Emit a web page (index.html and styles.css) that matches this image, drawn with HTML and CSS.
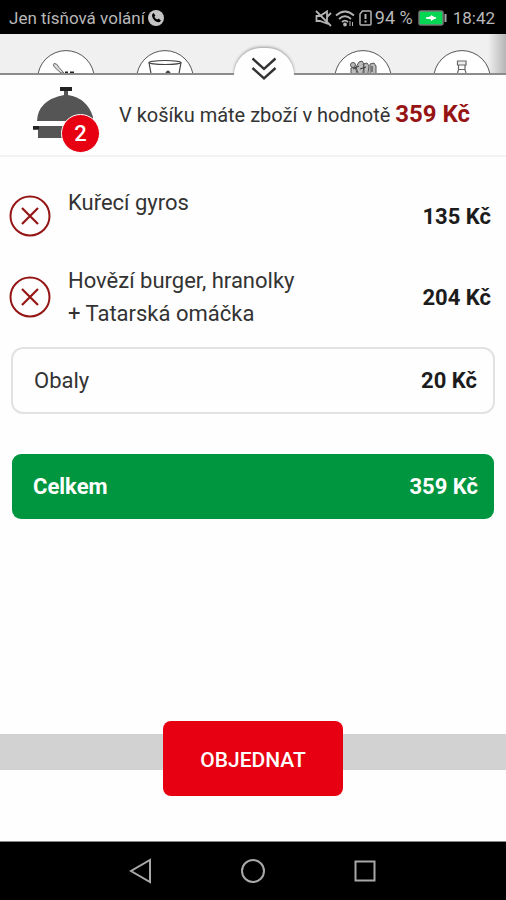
FILE: index.html
```html
<!DOCTYPE html>
<html lang="cs">
<head>
<meta charset="utf-8">
<meta name="viewport" content="width=device-width, initial-scale=1">
<title>Košík</title>
<link rel="stylesheet" href="styles.css">
</head>
<body>
<header class="status">
  <span class="carrier">Jen tísňová volání</span>
  <svg class="call" width="16" height="16" viewBox="0 0 16 16"><circle cx="8" cy="8" r="8" fill="#c4c4c4"/><path d="M4.2 4.2 5.6 3 7.4 5.600 6.400 6.800C7 8.100 8 9 9.300 9.600L10.500 8.600 13 10.400 11.800 12C8 13 3.200 8.200 4.200 4.200Z" fill="#000"/></svg>
  <span class="indicators">
    <svg width="17" height="18" viewBox="0 0 17 18" fill="none" stroke="#b4b4b4" stroke-width="1.800"><path d="M1.500 7H5L12 2.500v12L5 12H1.500ZM1 2l15 15M12 8l4-4"/></svg>
    <svg width="20" height="18" viewBox="0 0 20 18" fill="none" stroke="#b4b4b4" stroke-width="1.800"><path d="M1 6.500Q10-1.500 19 6.500M4 10Q10 4.500 16 10M7 13Q10 10.200 13 13"/><circle cx="10" cy="15.500" r="1" fill="#b4b4b4"/><path d="M15 12v5M17.500 13v4" stroke-width="1"/></svg>
    <svg width="14" height="18" viewBox="0 0 14 18" fill="none" stroke="#b4b4b4" stroke-width="1.500"><path d="M4.500 2H12q1 0 1 1v12q0 1-1 1H3q-1 0-1-1V5Z"/><path d="M7.500 5v5M7.500 11.500v2" stroke-width="2"/></svg>
    <span class="percent">94 %</span>
    <svg width="29" height="16" viewBox="0 0 29 16"><rect x="1" y="1" width="24" height="14" rx="2" fill="#05d653" stroke="#777" stroke-width="1.500"/><path d="M27.500 4v8" stroke="#aaa" stroke-width="2"/><path d="M8 8l5-2V5l5 3-5 3V9.500Z" fill="#fff"/><path d="M8 8h10" stroke="#fff" stroke-width="1.500"/></svg>
    <time class="clock">18:42</time>
  </span>
</header>

<nav class="categories" aria-label="Kategorie">
  <a class="category" href="#" aria-label="Hlavní jídla"><svg width="58" height="23" viewBox="0 0 58 23"><circle cx="29" cy="29" r="28.400" fill="#fff" stroke="#555"/><path d="M17 13.500q3-.5 5 4l5 5.500h-3l-4-3.500q-5-4-3-6Z" fill="#ddd" stroke="#666"/><path d="M28 22.300h3M33 22.300h4" stroke="#222" stroke-width="1.800"/></svg></a>
  <a class="category" href="#" aria-label="Polévky"><svg width="58" height="23" viewBox="0 0 58 23"><circle cx="29" cy="29" r="28.400" fill="#fff" stroke="#555"/><g fill="none" stroke="#444" stroke-width="1.200"><ellipse cx="29" cy="12.500" rx="16" ry="2"/><path d="M13 12.500l2 11M45 12.500l-2 11"/><path d="M30 23l2-1.500 2 1.500" stroke-width="2"/></g></svg></a>
  <button class="collapse" type="button" aria-label="Skrýt košík"><svg width="26" height="24" viewBox="0 0 26 24" fill="none" stroke="#333" stroke-width="2.400"><path d="M1.500 1.500 13 12 24.500 1.500M1.500 11 13 21.500 24.500 11"/></svg></button>
  <a class="category" href="#" aria-label="Přílohy"><svg width="58" height="23" viewBox="0 0 58 23"><circle cx="29" cy="29" r="28.400" fill="#fff" stroke="#555"/><g fill="#bbb" stroke="#555"><circle cx="19" cy="15" r="2.500"/><path d="M17 23v-5l4-1 2 6M24 23l-2-6 3-5 3-1 2 3-1 9M30 23v-6l-1-3 4-1 2 3-1 7M36 23v-9l4-1 2 3v7"/><path d="M19 19l6-3M26 19l6-2M38 16v6" stroke="#333"/></g></svg></a>
  <a class="category" href="#" aria-label="Nápoje"><svg width="58" height="23" viewBox="0 0 58 23"><circle cx="29" cy="29" r="28.400" fill="#fff" stroke="#555"/><path d="M24.500 11h8.500v4h-8.500ZM25.500 15v5l-1 3M32 15v5l1 3M25.500 19.500h6.500" fill="#eee" stroke="#666" stroke-width="1.200"/></svg></a>
</nav>

<main class="cart">
  <div class="summary">
    <div class="dish">
      <svg width="62" height="51" viewBox="0 0 62 51" fill="#555"><path d="M27 0h12v4h-4v4q19 3 25 22v4H4q1-21 27-26V4h-4Z"/><path d="M0 39h62v4h-4l-1 8H5V43H0Z"/><path d="M27 0h12v4H27ZM0 39h6v3H0Z" fill="#222"/></svg>
      <span class="badge">2</span>
    </div>
    <p class="worth">V košíku máte zboží v hodnotě <strong class="amount">359 Kč</strong></p>
  </div>

  <ul class="items">
    <li class="item">
      <button class="remove" type="button" aria-label="Odebrat Kuřecí gyros"><svg width="42" height="42" viewBox="0 0 42 42" fill="none" stroke="#951515" stroke-width="2"><circle cx="21" cy="21" r="19.500"/><path d="M13 13l16 16M29 13 13 29" stroke-width="2.200"/></svg></button>
      <span class="name">Kuřecí gyros</span>
      <strong class="price">135 Kč</strong>
    </li>
    <li class="item">
      <button class="remove" type="button" aria-label="Odebrat Hovězí burger"><svg width="42" height="42" viewBox="0 0 42 42" fill="none" stroke="#951515" stroke-width="2"><circle cx="21" cy="21" r="19.500"/><path d="M13 13l16 16M29 13 13 29" stroke-width="2.200"/></svg></button>
      <span class="name">Hovězí burger, hranolky<br>+ Tatarská omáčka</span>
      <strong class="price">204 Kč</strong>
    </li>
  </ul>

  <div class="row packaging"><span class="label">Obaly</span><strong class="price">20 Kč</strong></div>
  <div class="row total"><strong>Celkem</strong><strong>359 Kč</strong></div>

  <div class="checkout"><button class="order" type="button">OBJEDNAT</button></div>
</main>

<nav class="system" aria-label="Systém">
  <button class="key" type="button" aria-label="Zpět"><svg width="26" height="26" viewBox="0 0 26 26"><path d="M22 2v22L3 13Z"/></svg></button>
  <button class="key" type="button" aria-label="Domů"><svg width="26" height="26" viewBox="0 0 26 26"><circle cx="13" cy="13" r="11"/></svg></button>
  <button class="key" type="button" aria-label="Přehled"><svg width="26" height="26" viewBox="0 0 26 26"><rect x="3.500" y="3.500" width="19" height="19"/></svg></button>
</nav>
</body>
</html>
```
FILE: styles.css
```css
* { box-sizing: border-box; }

body {
  margin: 0;
  min-height: 100vh;
  display: flex;
  flex-direction: column;
  background: #fefefe;
  color: #1c1c1c;
  font: 22px/33px Roboto, sans-serif;
}

button {
  padding: 0;
  border: 0;
  background: none;
  font: inherit;
}

svg { display: block; flex: none; }

.status {
  height: 34px;
  display: flex;
  align-items: center;
  gap: 3px;
  padding: 2px 11px 0 9px;
  background: #000;
  color: #b8b8b8;
  font-size: 17px;
  line-height: 20px;
  white-space: nowrap;
}

.indicators {
  display: flex;
  align-items: center;
  gap: 3px;
  margin-left: auto;
}

.percent { margin-right: 2px; font-size: 18px; }
.clock { margin-left: 3px; font-size: 17px; }

.categories {
  height: 41px;
  display: flex;
  align-items: flex-end;
  justify-content: space-between;
  padding: 0 15px 0 37px;
  border-bottom: 2px solid #8c8c8c;
  background: linear-gradient(to left, #b5b5b5, #f0f0f0 18px);
}

.collapse {
  position: relative;
  width: 60px;
  height: 33px;
  margin: 0 -1px -8px;
  display: flex;
  justify-content: center;
  padding-top: 9px;
}

.collapse::before {
  content: "";
  position: absolute;
  inset: 0 0 6px;
  border-radius: 30px 30px 0 0;
  background: #fefefe;
  box-shadow: 0 -1px 3px #999;
  clip-path: inset(-6px -6px 0);
}

.collapse svg { position: relative; }

.cart {
  flex: 1;
  display: flex;
  flex-direction: column;
}

.summary {
  height: 82px;
  display: flex;
  align-items: center;
  gap: 24px;
  padding: 0 32px 0 33px;
  border-bottom: 2px solid #f3f3f3;
}

.dish { position: relative; margin-bottom: 6px; }

.badge {
  position: absolute;
  right: -5px;
  bottom: -15px;
  width: 39px;
  height: 39px;
  border: 1px solid #fff;
  border-radius: 50%;
  background: #e60012;
  color: #fff;
  font-weight: 500;
  line-height: 38px;
  text-align: center;
}

.worth {
  flex: 1;
  margin: 0;
  color: #333;
  font-size: 20px;
  white-space: nowrap;
}

.amount { color: #971414; font-size: 24px; font-weight: 700; }

.items {
  margin: 0;
  padding: 20px 15px 8px 9px;
  list-style: none;
}

.item {
  min-height: 78px;
  display: flex;
  align-items: center;
  gap: 17px;
  padding: 9px 0;
}

.name {
  flex: 1;
  align-self: flex-start;
  color: #333;
}

.label { color: #333; }

.price { font-weight: 700; }

.row {
  display: flex;
  align-items: center;
  justify-content: space-between;
  margin: 0 11px;
  padding: 15px 16px 15px 21px;
  border: 2px solid #e2e2e2;
  border-radius: 12px;
}

.total {
  margin: 40px 12px 0;
  padding: 16px 16px 16px 21px;
  border: 0;
  border-radius: 9px;
  background: #00963f;
  color: #fff;
}

.checkout {
  display: flex;
  justify-content: center;
  margin: auto 0 45px;
  background: linear-gradient(#d2d2d2, #d2d2d2) center 13px / 100% 36px no-repeat;
}

.order {
  padding: 23px 37px 19px;
  border-radius: 8px;
  background: #e60012;
  color: #fff;
  font-size: 21px;
  font-weight: 500;
}

.system {
  height: 59px;
  display: flex;
  align-items: center;
  justify-content: center;
  gap: 86px;
  border-top: 1px solid #888;
  background: #000;
}

.key svg { fill: none; stroke: #a8a8a8; stroke-width: 2; }
```
